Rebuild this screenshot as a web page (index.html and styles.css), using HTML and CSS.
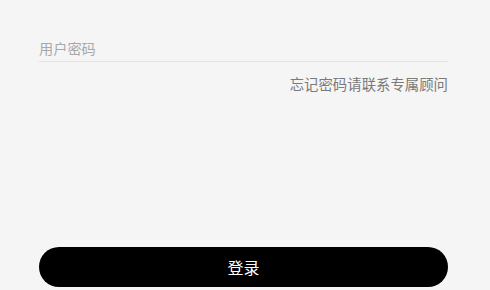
FILE: index.html
```html
<!DOCTYPE html>
<html lang="zh-CN">
<head>
    <meta charset="UTF-8">
    <meta name="viewport" content="width=device-width, initial-scale=1.0">
    <title>登录</title>
    <link rel="stylesheet" href="styles.css">
</head>
<body>
    <div class="login">
        <div class="field">
            <input type="password" class="field-input" placeholder="用户密码">
        </div>
        <div class="forgot">忘记密码请联系专属顾问</div>
        <button class="login-btn">登录</button>
    </div>
</body>
</html>
```

FILE: styles.css
```css
html, body {
    margin: 0;
    padding: 0;
    height: 100%;
}

body {
    font-family: "Noto Sans CJK SC", "Liberation Sans", sans-serif;
    background-color: #f5f5f5;
    color: #333;
}

.login {
    display: flex;
    flex-direction: column;
    height: 100%;
    box-sizing: border-box;
    padding: 34px 42px 3px 39px;
}

.field {
    border-bottom: 1px solid #e3e3e3;
}

.field-input {
    display: block;
    width: 100%;
    height: 27px;
    padding: 0;
    border: none;
    outline: none;
    background: transparent;
    font-family: inherit;
    font-size: 14.2px;
    color: #333;
}

.field-input::placeholder {
    color: #a8a8a8;
}

.forgot {
    margin-top: 12px;
    text-align: right;
    font-size: 14.4px;
    line-height: 20px;
    color: #7a7a7a;
}

.login-btn {
    margin-top: auto;
    height: 40px;
    border: none;
    border-radius: 20px;
    background-color: #000;
    color: #fff;
    font-family: inherit;
    font-size: 16px;
    cursor: pointer;
}
```
